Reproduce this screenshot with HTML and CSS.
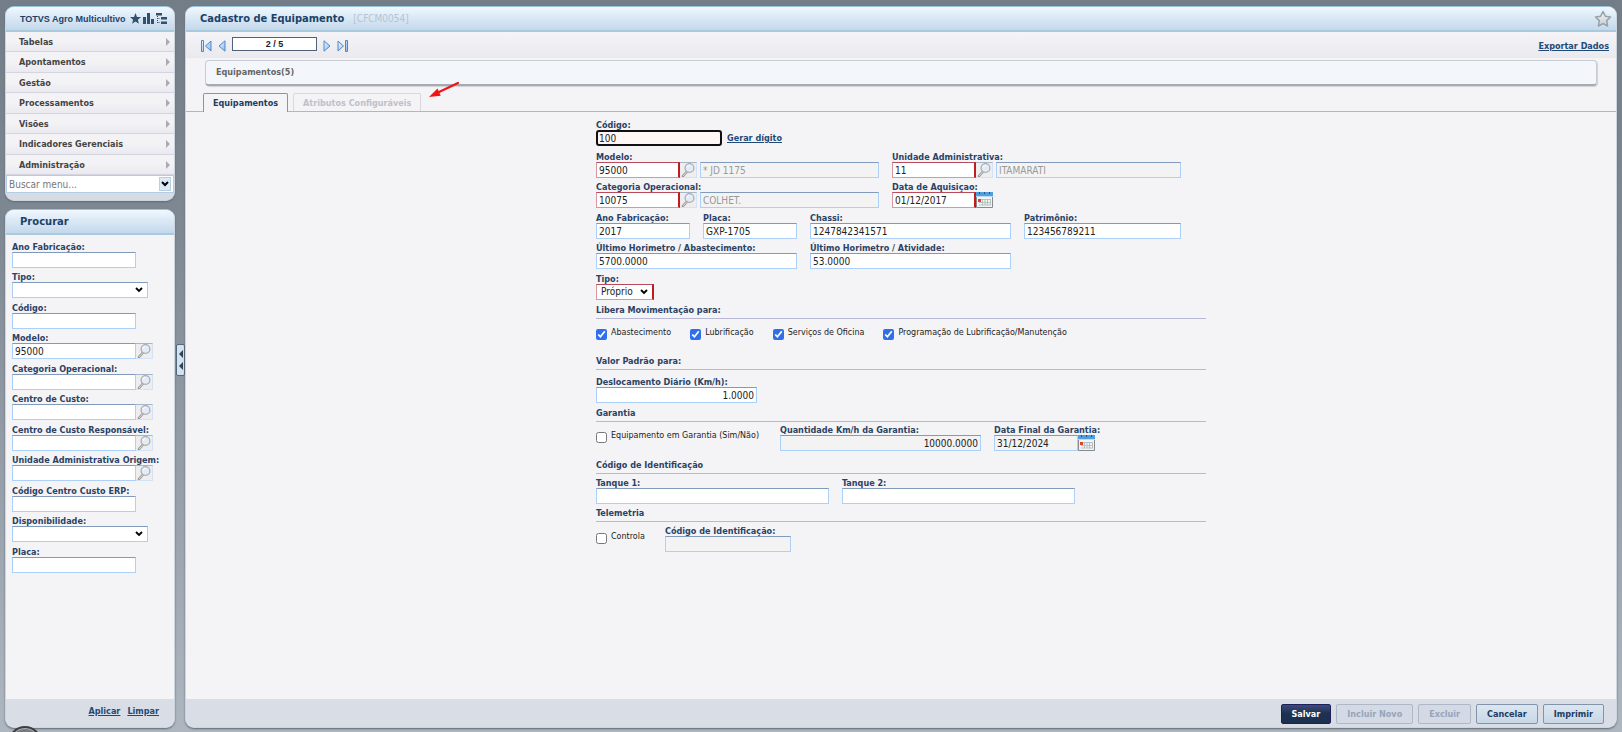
FILE: index.html
```html
<!DOCTYPE html>
<html lang="pt-BR">
<head>
<meta charset="utf-8">
<title>Cadastro de Equipamento</title>
<link rel="stylesheet" href="styles.css">
</head>
<body>
<svg class="defs" width="0" height="0" aria-hidden="true">
  <defs>
    <linearGradient id="blue" x1="0" y1="0" x2="1" y2="1"><stop offset="0" stop-color="#eaf6ff"/><stop offset="1" stop-color="#8bbdf0"/></linearGradient>
    <linearGradient id="grey" x1="0" y1="0" x2="0" y2="1"><stop offset="0" stop-color="#f4f6f8"/><stop offset="1" stop-color="#c6ccd2"/></linearGradient>
    <symbol id="lens" viewBox="1 1 14 14"><path d="M7 9.500 3 14" stroke="#999" stroke-width="2.600" stroke-linecap="round"/><path d="M7 9.500 3 14" stroke="#ddd" stroke-width="1"/><circle cx="9.500" cy="6" r="4.400" fill="#e4ebf4" stroke="#a9aeb6" stroke-width="1.300"/><path d="M7.300 5.500a2.200 2.200 0 0 1 2.200-2.200" stroke="#fff" fill="none"/></symbol>
    <symbol id="cal" viewBox="0 0 17 16"><path d="M.5 1h16v14.500H.5z" fill="#f2f4f3" stroke="#858b90"/><path d="M0 0h17v5H0z" fill="#4f9fe0"/><path d="M0 4h17v1H0z" fill="#b9dcf7"/><path d="M3 0h1v2H3zM8 0h1v2H8zM13 0h1v2h-1z" fill="#28547c"/><path d="M3 7.500h12M3 10.500h12M3 13h12M6.500 7v6M9 7v6M11.500 7v6M14.500 7v6" stroke="#b5c3c0"/><path d="M2 7h3v3H2z" fill="#e0402c"/></symbol>
  </defs>
</svg>
<div class="app">
  <aside class="side">
    <nav class="panel menu">
      <header class="bar"><h2 class="brand">TOTVS Agro Multicultivo</h2>
        <span class="tools">
          <svg width="11" height="11" viewBox="0 0 11 11"><path d="M5.500 0 7 3.900l4 .2-3.100 2.600 1 4.100-3.400-2.300-3.400 2.300 1-4.100L0 4.100l4-.2z" fill="#33506f"/></svg>
          <svg width="11" height="11" viewBox="0 0 11 11"><path d="M0 4h3v7H0zM4 0h3v11H4zM8 6h3v5H8z" fill="#33506f"/></svg>
          <svg width="11" height="11" viewBox="0 0 11 11"><path d="M0 0h6v2.500H0zM5 4h6v2.500H5zM5 8.500h6V11H5z" fill="#33506f"/><path d="M1.500 3v7M1.500 5.500H4M1.500 9.500H4" stroke="#33506f" stroke-dasharray="1 1"/></svg>
        </span>
      </header>
      <ul>
        <li><a href="#">Tabelas</a></li><li><a href="#">Apontamentos</a></li><li><a href="#">Gestão</a></li><li><a href="#">Processamentos</a></li><li><a href="#">Visões</a></li><li><a href="#">Indicadores Gerenciais</a></li><li><a href="#">Administração</a></li>
      </ul>
      <div class="find"><input type="text" placeholder="Buscar menu..." aria-label="Buscar menu"><button type="button" aria-label="Abrir menu"><svg width="8" height="6" viewBox="0 0 8 6"><path d="m1 1 3 3 3-3" fill="none" stroke="#000" stroke-width="2"/></svg></button></div>
    </nav>
    <form class="panel search">
      <header class="bar"><h2>Procurar</h2></header>
      <div class="filters">
        <div class="field"><label for="f1">Ano Fabricação:</label><input id="f1" type="text"></div>
        <div class="field"><label for="f2">Tipo:</label><select id="f2"><option></option></select></div>
        <div class="field"><label for="f3">Código:</label><input id="f3" type="text"></div>
        <div class="field"><label for="f4">Modelo:</label><div class="combo"><input id="f4" type="text" value="95000"><button type="button" aria-label="Pesquisar"><svg><use href="#lens"/></svg></button></div></div>
        <div class="field"><label for="f5">Categoria Operacional:</label><div class="combo"><input id="f5" type="text"><button type="button" aria-label="Pesquisar"><svg><use href="#lens"/></svg></button></div></div>
        <div class="field"><label for="f6">Centro de Custo:</label><div class="combo"><input id="f6" type="text"><button type="button" aria-label="Pesquisar"><svg><use href="#lens"/></svg></button></div></div>
        <div class="field"><label for="f7">Centro de Custo Responsável:</label><div class="combo"><input id="f7" type="text"><button type="button" aria-label="Pesquisar"><svg><use href="#lens"/></svg></button></div></div>
        <div class="field"><label for="f8">Unidade Administrativa Origem:</label><div class="combo"><input id="f8" type="text"><button type="button" aria-label="Pesquisar"><svg><use href="#lens"/></svg></button></div></div>
        <div class="field"><label for="f9">Código Centro Custo ERP:</label><input id="f9" type="text"></div>
        <div class="field"><label for="f10">Disponibilidade:</label><select id="f10"><option></option></select></div>
        <div class="field"><label for="f11">Placa:</label><input id="f11" type="text"></div>
      </div>
      <footer class="actions"><a href="#">Aplicar</a><a href="#">Limpar</a></footer>
    </form>
  </aside>
  <button class="handle" type="button" aria-label="Recolher painel"><svg width="4" height="20" viewBox="0 0 4 20"><path d="M4 0v8L0 4zM4 12v8l-4-4z" fill="#33414f"/></svg></button>
  <main class="panel content">
    <header class="bar"><h1>Cadastro de Equipamento</h1><span class="code">[CFCM0054]</span>
      <button class="fav" type="button" aria-label="Favorito"><svg width="18" height="18" viewBox="0 0 18 18"><path d="m9 1.500 2.300 4.700 5.200.8-3.800 3.600.9 5.400L9 13.600 4.400 16l.9-5.400L1.500 7l5.200-.8z" fill="url(#grey)" stroke="#98a2ac" stroke-width="1.500" stroke-linejoin="round"/></svg></button>
    </header>
    <div class="toolbar">
      <button type="button" aria-label="Primeiro"><svg width="11" height="12" viewBox="0 0 11 12"><path d="M.5.5h2v11h-2zM10 1v10L4.500 6z" fill="url(#blue)" stroke="#5285c8"/></svg></button>
      <button type="button" aria-label="Anterior"><svg width="8" height="12" viewBox="0 0 8 12"><path d="M7 .8v10.400L1 6z" fill="url(#blue)" stroke="#5285c8"/></svg></button>
      <input class="page" type="text" value="2 / 5" aria-label="Registro">
      <button type="button" aria-label="Próximo"><svg width="8" height="12" viewBox="0 0 8 12"><path d="M1 .8v10.400L7 6z" fill="url(#blue)" stroke="#5285c8"/></svg></button>
      <button type="button" aria-label="Último"><svg width="11" height="12" viewBox="0 0 11 12"><path d="M8.500.5h2v11h-2zM1 1v10L6.500 6z" fill="url(#blue)" stroke="#5285c8"/></svg></button>
      <a class="export" href="#">Exportar Dados</a>
    </div>
    <div class="group">Equipamentos(5)</div>
    <div class="tabs"><button class="tab on" type="button">Equipamentos</button><button class="tab" type="button" disabled>Atributos Configuráveis</button>
      <svg class="arrow" width="32" height="18" viewBox="0 0 32 18"><path d="M30 2 10 11.500" stroke="#f01414" stroke-width="2.200" stroke-linecap="round"/><path d="m1 16 8.500-8.500 3.200 7.300z" fill="#f01414"/></svg>
    </div>
    <form class="form">
      <div class="row first"><div class="field w126"><label for="codigo">Código:</label><input id="codigo" class="focus" type="text" value="100"></div><a href="#">Gerar dígito</a></div>
      <div class="row"><div class="field w283"><label for="modelo">Modelo:</label><div class="combo"><input id="modelo" class="req w84" type="text" value="95000"><button type="button" aria-label="Pesquisar"><svg><use href="#lens"/></svg></button><input class="desc" type="text" value="* JD 1175" aria-label="Nome do modelo" disabled></div></div>
        <div class="field w289"><label for="unidade">Unidade Administrativa:</label><div class="combo"><input id="unidade" class="req w84" type="text" value="11"><button type="button" aria-label="Pesquisar"><svg><use href="#lens"/></svg></button><input class="desc" type="text" value="ITAMARATI" aria-label="Nome da unidade" disabled></div></div></div>
      <div class="row tall"><div class="field w283"><label for="cat">Categoria Operacional:</label><div class="combo"><input id="cat" class="req w84" type="text" value="10075"><button type="button" aria-label="Pesquisar"><svg><use href="#lens"/></svg></button><input class="desc" type="text" value="COLHET." aria-label="Nome da categoria" disabled></div></div>
        <div class="field"><label for="aq">Data de Aquisiçao:</label><div class="combo"><input id="aq" class="req w84" type="text" value="01/12/2017"><button class="cal" type="button" aria-label="Calendário"><svg><use href="#cal"/></svg></button></div></div></div>
      <div class="row"><div class="field w94"><label for="ano">Ano Fabricação:</label><input id="ano" type="text" value="2017"></div><div class="field w94"><label for="placa">Placa:</label><input id="placa" type="text" value="GXP-1705"></div><div class="field w201"><label for="chassi">Chassi:</label><input id="chassi" type="text" value="1247842341571"></div><div class="field w157"><label for="pat">Patrimônio:</label><input id="pat" type="text" value="123456789211"></div></div>
      <div class="row tall"><div class="field w201"><label for="hab">Último Horimetro / Abastecimento:</label><input id="hab" type="text" value="5700.0000"></div><div class="field w201"><label for="hat">Último Horimetro / Atividade:</label><input id="hat" type="text" value="53.0000"></div></div>
      <div class="row tall"><div class="field w58"><label for="tipo">Tipo:</label><select id="tipo" class="req"><option>Próprio</option></select></div></div>
      <h3>Libera Movimentação para:</h3>
      <div class="checks">
        <label class="check"><input type="checkbox" checked>Abastecimento</label><label class="check"><input type="checkbox" checked>Lubrificação</label><label class="check"><input type="checkbox" checked>Serviços de Oficina</label><label class="check"><input type="checkbox" checked>Programação de Lubrificação/Manutenção</label>
      </div>
      <h3>Valor Padrão para:</h3>
      <div class="row gap"><div class="field w161"><label for="desl">Deslocamento Diário (Km/h):</label><input id="desl" class="num" type="text" value="1.0000"></div></div>
      <h3>Garantia</h3>
      <div class="row split wide"><label class="check w171"><input type="checkbox">Equipamento em Garantia (Sim/Não)</label><div class="field w201"><label for="qtd">Quantidade Km/h da Garantia:</label><input id="qtd" class="num ro" type="text" value="10000.0000" readonly></div><div class="field"><label for="fim">Data Final da Garantia:</label><div class="combo"><input id="fim" class="ro w84" type="text" value="31/12/2024" readonly><button class="cal" type="button" aria-label="Calendário"><svg><use href="#cal"/></svg></button></div></div></div>
      <h3>Código de Identificação</h3>
      <div class="row split"><div class="field w233"><label for="t1">Tanque 1:</label><input id="t1" type="text"></div><div class="field w233"><label for="t2">Tanque 2:</label><input id="t2" type="text"></div></div>
      <h3>Telemetria</h3>
      <div class="row split"><label class="check w56"><input type="checkbox">Controla</label><div class="field w126"><label for="tel">Código de Identificação:</label><input id="tel" class="ro" type="text" readonly></div></div>
    </form>
    <footer class="actions"><button class="btn primary" type="button">Salvar</button><button class="btn" type="button" disabled>Incluir Novo</button><button class="btn" type="button" disabled>Excluir</button><button class="btn" type="button">Cancelar</button><button class="btn" type="button">Imprimir</button></footer>
  </main>
</div>
<div class="bubble"></div>
</body>
</html>
```
FILE: styles.css
```css
* { box-sizing: border-box; }
html { height: 100%; }
body {
  margin: 0;
  min-height: 100%;
  overflow: hidden;
  background: linear-gradient(#737d88, #7e8893 30%, #aeb7c0);
  font: 9px/10px "DejaVu Sans Condensed", "DejaVu Sans", sans-serif;
  color: #222;
}
.defs { position: absolute; }
a { color: #1f4a78; font-weight: bold; }
button { padding: 0; border: 0; background: none; font: inherit; }
svg { display: block; }
h1, h2, h3, ul { margin: 0; padding: 0; }

.app { display: flex; min-height: 100vh; padding: 6px 5px 4px; }
.side { display: flex; flex-direction: column; flex: none; width: 170px; gap: 8px; }
.panel {
  display: flex;
  flex-direction: column;
  overflow: hidden;
  border: 1px solid #cdd5de;
  border-top-color: #9cc3dc;
  border-radius: 9px;
  background: #f4f4f7;
  box-shadow: 0 1px 2px #5f6973;
}
.bar {
  display: flex;
  align-items: center;
  flex: none;
  height: 25px;
  padding: 0 4px 0 14px;
  border-bottom: 2px solid #a9cadd;
  background: linear-gradient(#f0f8fe, #dbe9f5 45%, #c4d8ec);
  color: #1c4268;
}
h1, h2 { font-size: 10px; line-height: 14px; font-family: "DejaVu Sans", sans-serif; }
h1 { font-size: 11px; font-family: "DejaVu Sans Condensed", sans-serif; }
h2.brand { font-size: 9px; font-family: "Liberation Sans", sans-serif; }
.tools { display: flex; gap: 2px; margin-left: auto; padding-right: 3px; }

.menu { background: #d6dbe4; padding-bottom: 7px; }
.menu ul { display: grid; grid-auto-rows: 20px 21px; list-style: none; }
.menu li { border-bottom: 1px solid #d5d5e2; background: linear-gradient(#f3f3f6 50%, #e9e9ef); }
.menu a {
  display: flex;
  align-items: center;
  justify-content: space-between;
  height: 100%;
  padding: 0 4px 0 13px;
  color: #444;
  text-decoration: none;
}
.menu a::after { content: ""; border-left: 4px solid #aaaab2; border-top: 4px solid transparent; border-bottom: 4px solid transparent; }
.find { display: flex; align-items: center; height: 18px; padding-right: 2px; border: 1px solid #b4cde2; background: #fff; }
.find input { flex: 1; min-width: 0; }
.find input::placeholder { color: #777; }
.find button { display: grid; place-items: center; width: 12px; height: 14px; border: 1px solid #b8cfe2; background: #dceaf6; }

.search { flex: 1; }
.filters { display: grid; grid-auto-rows: 30px 31px; align-content: start; flex: 1; padding: 7px 6px 0; }
.filters select { width: 136px; }

.field { display: flex; flex-direction: column; align-items: stretch; }
.filters .field { align-items: flex-start; }
.field > label { height: 10px; color: #2b4263; font-weight: bold; white-space: nowrap; }
input[type=text], select {
  height: 16px;
  padding: 0 2px;
  border: 1px solid #acd0f8;
  border-top-color: #8199ba;
  border-radius: 0;
  background: #fff;
  color: #222;
  font: 10px/14px "DejaVu Sans Condensed", sans-serif;
  outline: 0;
}
.filters input[type=text] { width: 124px; }
select {
  appearance: none;
  background: #fff url("data:image/svg+xml,%3Csvg xmlns='http://www.w3.org/2000/svg' viewBox='0 0 8 6'%3E%3Cpath d='m1 1 3 3 3-3' fill='none' stroke='%23000' stroke-width='1.8'/%3E%3C/svg%3E") right 4px center / 8px 6px no-repeat;
}
.find input[type=text] { border: 0; }
.combo { display: flex; }
.combo button { flex: none; width: 17px; height: 16px; border: 1px solid #d3e2f4; border-left: 0; border-top-color: #a7b5c8; background: #eee; }
.combo button svg { width: 16px; height: 14px; }
.combo .cal { border: 0; }
.combo .cal svg { width: 17px; height: 16px; }
.combo .desc { flex: 1; min-width: 0; margin-left: 3px; color: #999; background: #f3f3f3; }
input.req[type=text], select.req { border-color: #b84a5a #c01c20 #d995a0 #d995a0; border-right-width: 2px; }
select.req { padding-left: 4px; }
input.ro[type=text] { background: #f3f3f3; }
input.num[type=text] { text-align: right; }
input.focus[type=text] { border: 2px solid #111; border-radius: 3px; background: #fff6f6; padding: 0 1px; }

.handle { align-self: center; flex: none; display: grid; place-items: center; width: 9px; height: 32px; margin: 0 0 14px 1px; border: 1px solid #52667c; border-radius: 2px; background: #d3e2f0; }

.content { flex: 1; min-width: 0; }
.content .bar { gap: 9px; }
.code { color: #b4c3d3; font-size: 10px; }
.fav { margin-left: auto; }
.toolbar { display: flex; align-items: center; flex: none; height: 26px; padding: 2px 7px 0 15px; gap: 6px; background: linear-gradient(#f5f5f8, #e9e9ee); }
.toolbar .page { width: 85px; height: 14px; margin-bottom: 4px; border: 1px solid #51617a; text-align: center; font: bold 9px/12px "Liberation Sans", sans-serif; }
.export { margin-left: auto; }
.group { flex: none; height: 26px; margin: 2px 19px 0; padding: 6px 10px; border: 1px solid #c9ccd2; border-bottom: 2px solid #a7abb0; border-radius: 4px; background: #f3f7fc; color: #666; font-weight: bold; box-shadow: 1px 1px 1px #d0d2d6; }
.tabs { display: flex; align-items: flex-end; flex: none; height: 26px; gap: 5px; padding: 0 17px; border-bottom: 1px solid #adb9bb; }
.tab { height: 18px; padding: 0 9px; border: 1px solid #d8d8dd; border-bottom: 0; border-radius: 2px 2px 0 0; color: #c0c0c8; font-weight: bold; }
.tab.on { height: 19px; margin-bottom: -1px; border-color: #8f91a8; background: #f4f4f7; color: #1c3c63; }
.arrow { margin: 0 0 12px 2px; }

.form { flex: 1; width: 610px; max-width: 100%; margin: 0 auto; padding-top: 8px; }
.row { display: flex; align-items: flex-start; gap: 13px; height: 30px; }
.row.tall { height: 31px; }
.row.first { height: 32px; gap: 5px; }
.row.first a { margin-top: 13px; }
.row.gap { height: 31px; margin-top: 7px; }
.row.split { height: 30px; margin-top: 4px; }
.row.split.wide { height: 35px; margin-top: 3px; }
.w56 { width: 56px; }
.w58 { width: 58px; }
.w84 { width: 84px; }
.w94 { width: 94px; }
.w126 { width: 126px; }
.w157 { width: 157px; }
.w161 { width: 161px; }
.w171 { width: 171px; }
.w201 { width: 201px; }
.w233 { width: 233px; }
.w283 { width: 283px; }
.w289 { width: 289px; }
h3 { height: 14px; border-bottom: 1px solid #b7b7d6; color: #2b4263; font-size: 9px; line-height: 10px; }
.checks { display: flex; gap: 19px; height: 37px; padding-top: 9px; }
.check { display: flex; gap: 4px; font: 8px/10px "DejaVu Sans", sans-serif; white-space: nowrap; }
.check input { flex: none; width: 11px; height: 11px; margin: 1px 0 0; accent-color: #2f6fed; }
.split .check { padding-top: 6px; }

.actions { display: flex; align-items: center; flex: none; justify-content: flex-end; height: 28px; padding: 2px 12px 0 0; gap: 5px; background: #d8dde6; }
.search .actions { gap: 7px; padding: 0 15px 5px 0; }
.btn { height: 20px; padding: 0 10px; border: 1px solid #8294ab; border-radius: 2px; background: linear-gradient(#dce6f0, #c8d7e6); color: #203c60; font-weight: bold; }
.btn:disabled { border-color: #b0b8c8; background: #d3dae5; color: #98a4b8; }
.btn.primary { border-color: #201f5e; background: linear-gradient(#3c4a78, #1c3150 50%); color: #fff; }
.bubble { position: absolute; left: 8px; bottom: -28px; width: 34px; height: 34px; border: 2px solid #3c4043; border-radius: 50%; background: #777b80; box-shadow: inset 0 0 0 1px #b0b3b6; }
```
